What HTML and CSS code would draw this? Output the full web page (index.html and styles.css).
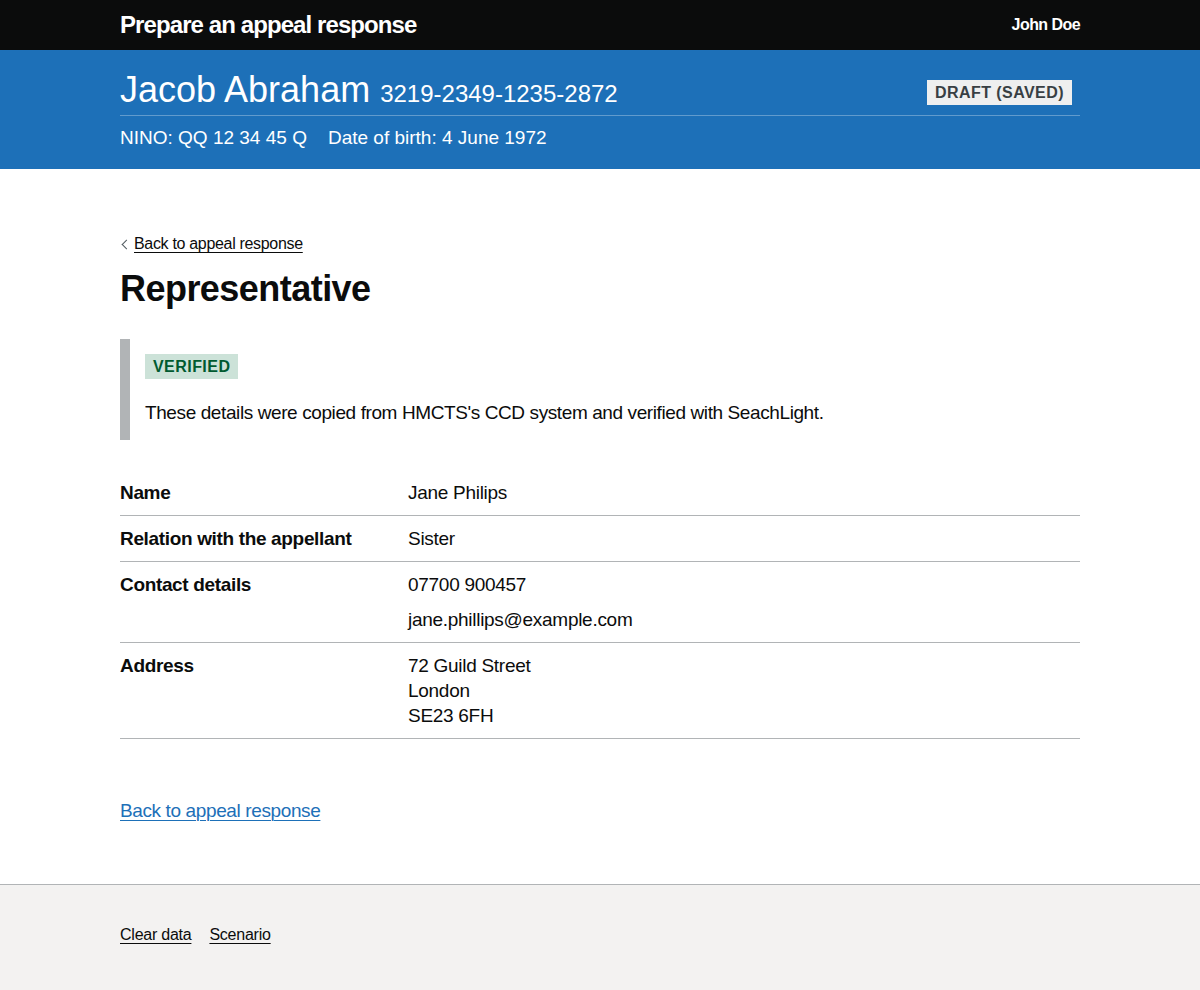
FILE: index.html
```html
<!DOCTYPE html>
<html lang="en">
<head>
<meta charset="utf-8">
<title>Representative - Prepare an appeal response</title>
<link rel="stylesheet" href="styles.css">
</head>
<body>
<header class="top">
  <div class="wrap top__inner">
    <span class="service">Prepare an appeal response</span>
    <span class="user">John Doe</span>
  </div>
</header>
<div class="band">
  <div class="wrap">
    <div class="band__row">
      <h2 class="person">Jacob Abraham <span class="ref">3219-2349-1235-2872</span></h2>
      <strong class="tag tag--grey">Draft (saved)</strong>
    </div>
    <div class="meta">
      <span>NINO: QQ 12 34 45 Q</span>
      <span>Date of birth: 4 June 1972</span>
    </div>
  </div>
</div>
<main class="wrap main">
  <a class="back" href="#">Back to appeal response</a>
  <h1 class="title">Representative</h1>
  <div class="inset">
    <div class="inset__tag"><strong class="tag tag--green">Verified</strong></div>
    <p class="inset__text">These details were copied from HMCTS's CCD system and verified with SeachLight.</p>
  </div>
  <dl class="summary">
    <div class="summary__row">
      <dt class="summary__key">Name</dt>
      <dd class="summary__value">Jane Philips</dd>
    </div>
    <div class="summary__row">
      <dt class="summary__key">Relation with the appellant</dt>
      <dd class="summary__value">Sister</dd>
    </div>
    <div class="summary__row">
      <dt class="summary__key">Contact details</dt>
      <dd class="summary__value">
        <p class="summary__p">07700 900457</p>
        <p class="summary__p">jane.phillips@example.com</p>
      </dd>
    </div>
    <div class="summary__row">
      <dt class="summary__key">Address</dt>
      <dd class="summary__value">72 Guild Street<br>London<br>SE23 6FH</dd>
    </div>
  </dl>
  <p class="bottom-link"><a class="link" href="#">Back to appeal response</a></p>
</main>
<footer class="footer">
  <div class="wrap footer__links">
    <a class="footer__link" href="#">Clear data</a>
    <a class="footer__link" href="#">Scenario</a>
  </div>
</footer>
</body>
</html>
```
FILE: styles.css
```css
* { box-sizing: border-box; }

html, body {
  margin: 0;
  padding: 0;
  background: #ffffff;
}

body {
  font-family: "Liberation Sans", Arial, sans-serif;
  color: #0b0c0c;
  -webkit-font-smoothing: antialiased;
}

.wrap {
  width: 960px;
  margin: 0 auto;
}

/* Black header */
.top {
  background: #0b0c0c;
  color: #ffffff;
  height: 50px;
}

.top__inner {
  height: 50px;
  display: flex;
  align-items: center;
  justify-content: space-between;
}

.service {
  font-weight: 700;
  font-size: 24px;
  line-height: 30px;
  letter-spacing: -0.038em;
  margin-top: -1px;
}

.user {
  font-weight: 700;
  font-size: 16px;
  line-height: 20px;
  letter-spacing: -0.035em;
  margin-top: -1px;
}

/* Blue band */
.band {
  background: #1d70b8;
  color: #ffffff;
  padding: 20px 0 19px;
  font-family: "Liberation Sans", Arial, sans-serif;
}

.band__row {
  display: flex;
  justify-content: space-between;
  align-items: flex-start;
  padding-bottom: 5px;
  border-bottom: 1px solid rgba(255, 255, 255, 0.3);
}

.person {
  margin: 0;
  height: 40px;
  font-weight: 400;
  font-size: 36px;
  line-height: 40px;
}

.ref {
  font-size: 24px;
  line-height: 1;
}

.meta {
  display: flex;
  gap: 21px;
  margin-top: 9px;
  font-size: 19px;
  line-height: 25px;
}

/* Tags */
.tag {
  display: inline-block;
  font-weight: 700;
  font-size: 16px;
  line-height: 16px;
  padding: 5px 8px 4px;
  letter-spacing: 0.45px;
  text-transform: uppercase;
}

.tag--grey {
  background: #eeefef;
  color: #383f43;
  margin-top: 10px;
  margin-right: 8px;
}

.tag--green {
  background: #cce2d8;
  color: #005a30;
}

/* Main */
.main {
  display: block;
  padding-top: 50px;
}

.back {
  display: inline-block;
  position: relative;
  margin-top: 15px;
  margin-bottom: 15px;
  padding-left: 14px;
  font-size: 16px;
  line-height: 20px;
  color: #0b0c0c;
  text-decoration: underline;
  text-decoration-thickness: 1px;
  text-underline-offset: 0.16em;
  letter-spacing: -0.02em;
}

.back::before {
  content: "";
  position: absolute;
  left: 3px;
  top: 7px;
  width: 6px;
  height: 6px;
  border-left: 1px solid #505a5f;
  border-top: 1px solid #505a5f;
  transform: rotate(-45deg);
}

.title {
  margin: 0 0 30px;
  font-weight: 700;
  font-size: 36px;
  line-height: 40px;
  letter-spacing: -0.015em;
}

.inset {
  border-left: 10px solid #b1b4b6;
  padding: 15px 0 15px 15px;
  margin: 0 0 30px;
}

.inset__tag {
  height: 25px;
  margin-bottom: 21px;
}

.inset__text {
  margin: 0;
  font-size: 19px;
  line-height: 25px;
  letter-spacing: -0.021em;
}

/* Summary list */
.summary {
  margin: 0;
}

.summary__row {
  display: grid;
  grid-template-columns: 30% 70%;
  border-bottom: 1px solid #b1b4b6;
}

.summary__key,
.summary__value {
  margin: 0;
  padding: 10px 20px 10px 0;
  font-size: 19px;
  line-height: 25px;
}

.summary__key {
  font-weight: 700;
  letter-spacing: -0.018em;
}

.summary__value {
  letter-spacing: -0.015em;
}

.summary__p {
  margin: 0 0 10px;
}

.summary__p:last-child {
  margin-bottom: 0;
}

.bottom-link {
  margin: 59px 0 61px;
  font-size: 19px;
  line-height: 25px;
}

.link {
  color: #1d70b8;
  text-decoration: underline;
  text-decoration-thickness: 1px;
  text-underline-offset: 0.16em;
  letter-spacing: -0.02em;
}

/* Footer */
.footer {
  background: #f3f2f1;
  border-top: 1px solid #b1b4b6;
  padding: 40px 0 45px;
}

.footer__links {
  display: flex;
  gap: 18px;
}

.footer__link {
  font-size: 16px;
  line-height: 20px;
  color: #0b0c0c;
  text-decoration: underline;
  text-decoration-thickness: 1px;
  text-underline-offset: 0.16em;
  letter-spacing: -0.015em;
}
```
